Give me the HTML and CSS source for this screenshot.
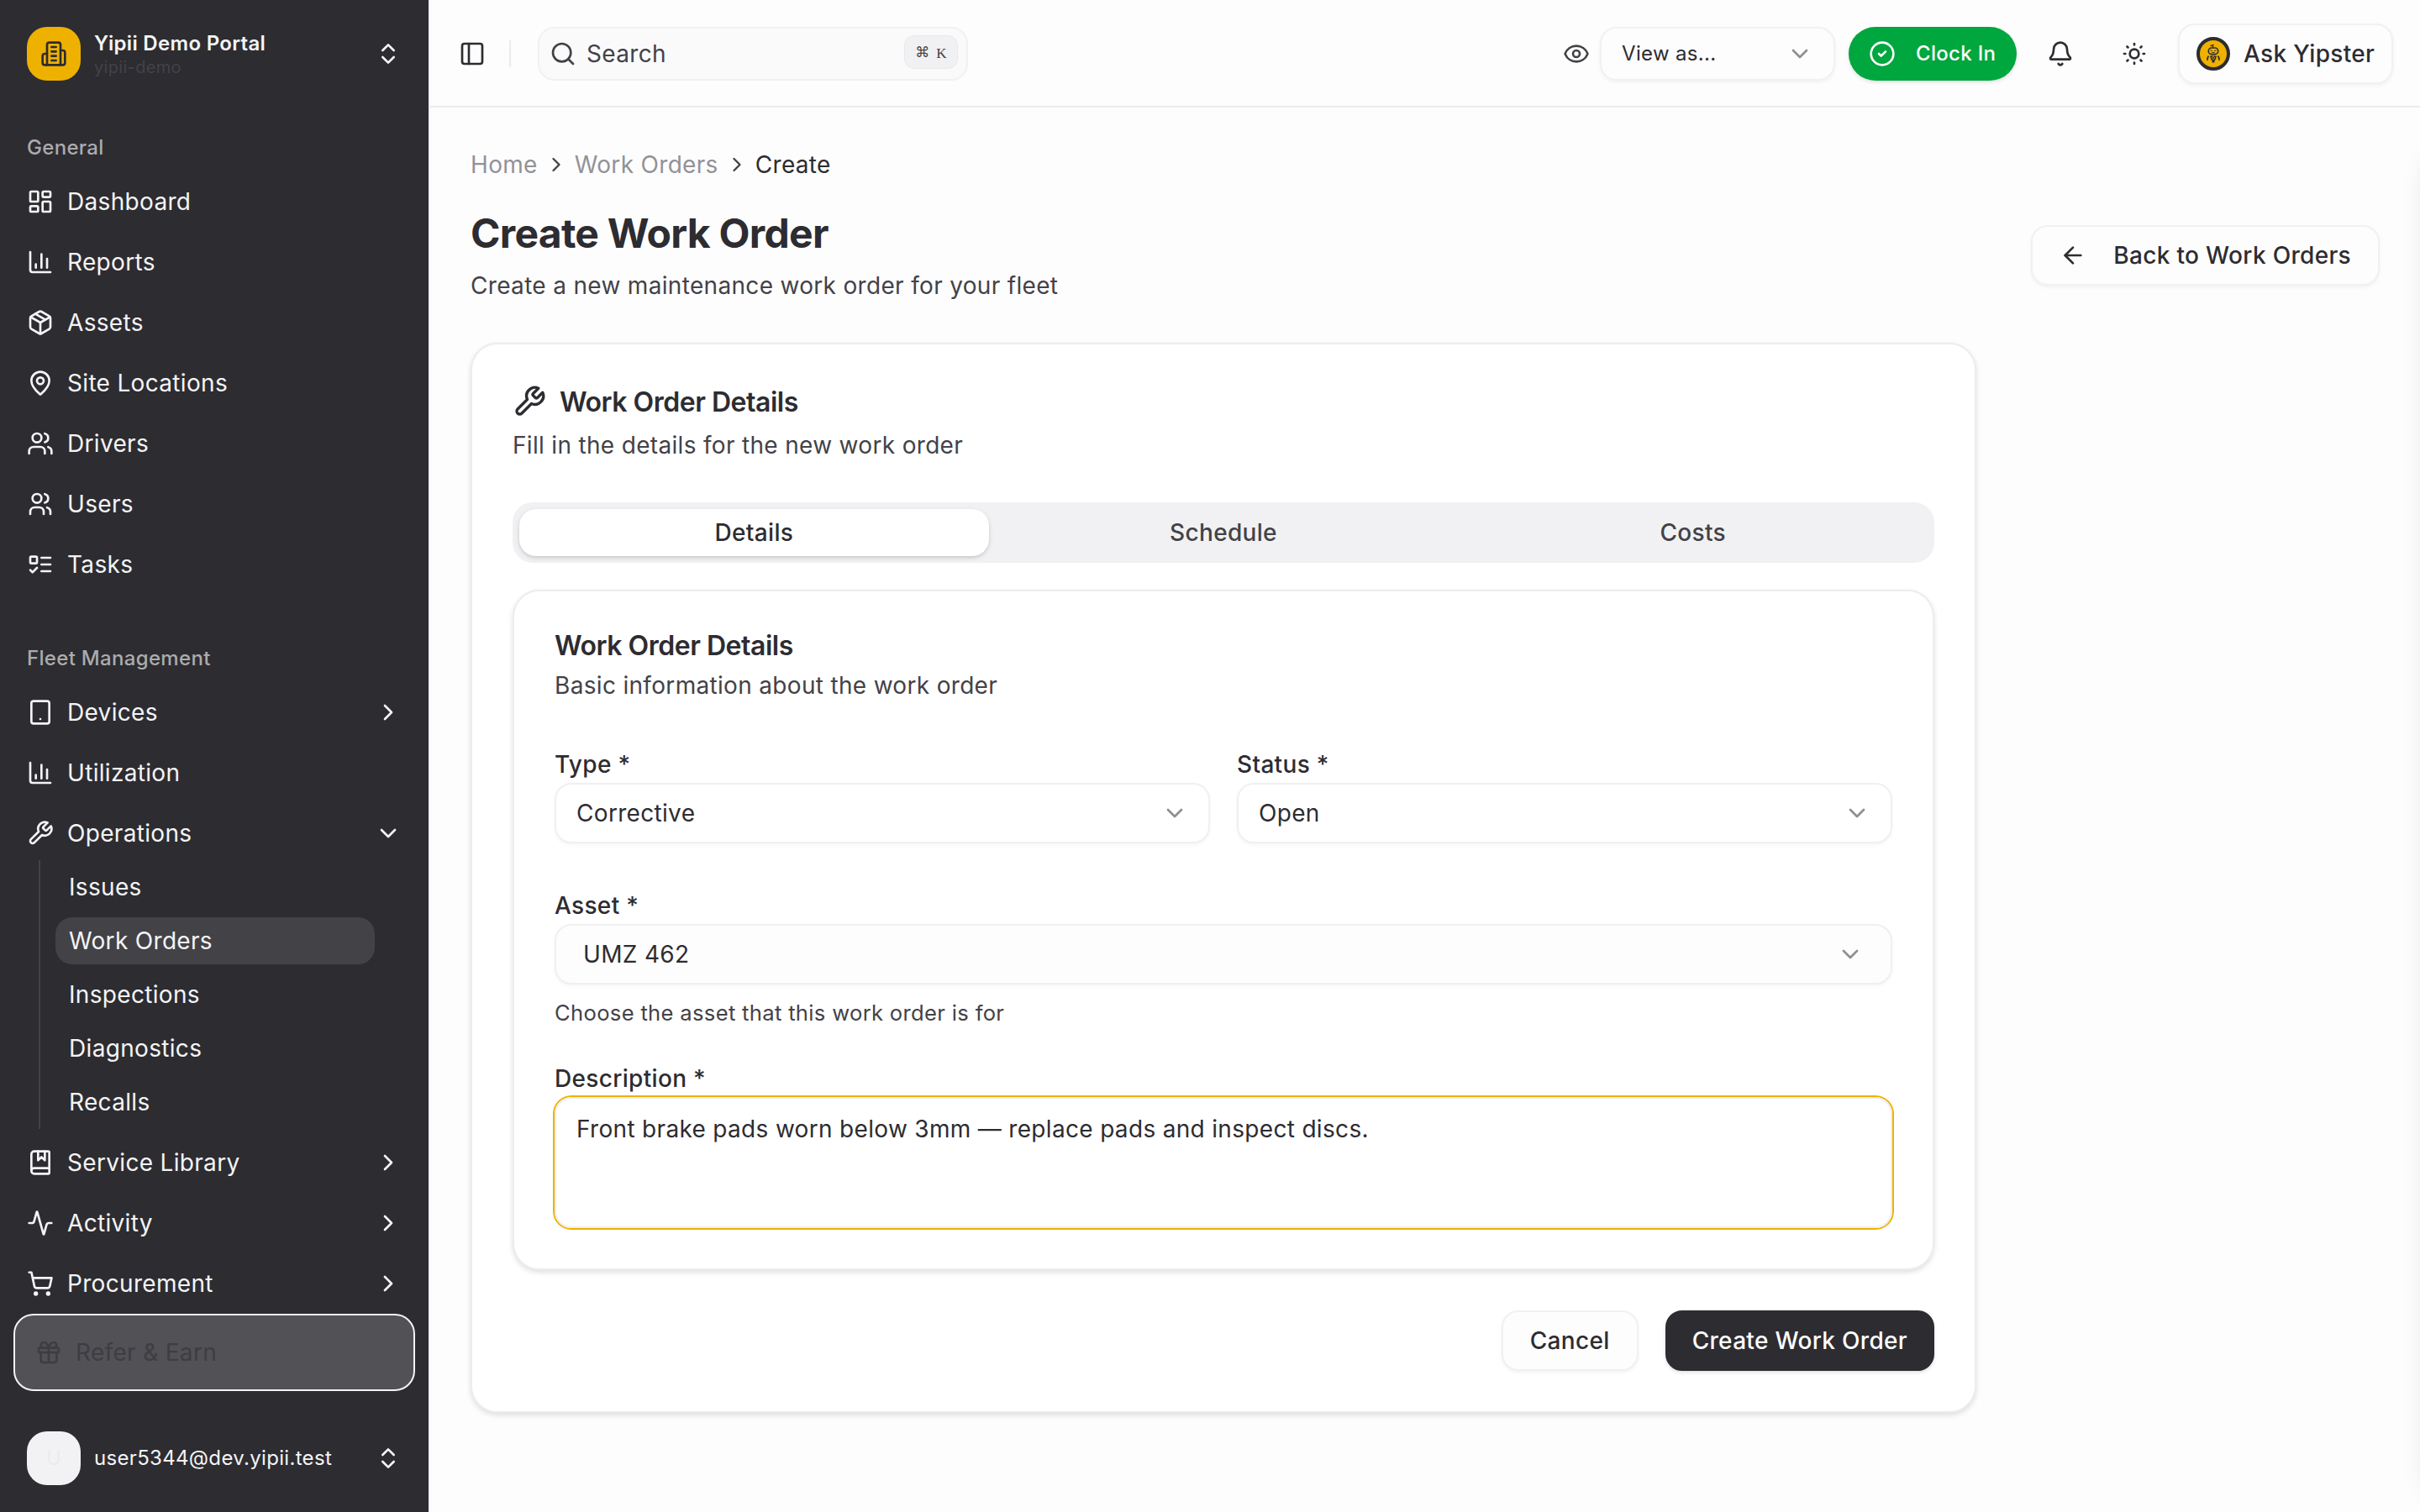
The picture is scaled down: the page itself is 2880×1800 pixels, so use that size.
FILE: index.html
```html
<!DOCTYPE html>
<html lang="en">
<head>
<meta charset="utf-8">
<title>Create Work Order</title>
<link rel="stylesheet" href="styles.css">
</head>
<body>
<svg class="sprite" xmlns="http://www.w3.org/2000/svg">
  <symbol id="i-building" viewBox="0 0 24 24"><path d="M6 22V4a2 2 0 0 1 2-2h8a2 2 0 0 1 2 2v18Z"/><path d="M6 12H4a2 2 0 0 0-2 2v6a2 2 0 0 0 2 2h2"/><path d="M18 9h2a2 2 0 0 1 2 2v9a2 2 0 0 1-2 2h-2"/><path d="M10 6h4M10 10h4M10 14h4M10 18h4"/></symbol>
  <symbol id="i-updown" viewBox="0 0 24 24"><path d="m7 15 5 5 5-5"/><path d="m7 9 5-5 5 5"/></symbol>
  <symbol id="i-right" viewBox="0 0 24 24"><path d="m9 18 6-6-6-6"/></symbol>
  <symbol id="i-down" viewBox="0 0 24 24"><path d="m6 9 6 6 6-6"/></symbol>
  <symbol id="i-dashboard" viewBox="0 0 24 24"><rect width="7" height="9" x="3" y="3" rx="1"/><rect width="7" height="5" x="14" y="3" rx="1"/><rect width="7" height="9" x="14" y="12" rx="1"/><rect width="7" height="5" x="3" y="16" rx="1"/></symbol>
  <symbol id="i-chart" viewBox="0 0 24 24"><path d="M3 3v16a2 2 0 0 0 2 2h16"/><path d="M18 17V9"/><path d="M13 17V5"/><path d="M8 17v-3"/></symbol>
  <symbol id="i-package" viewBox="0 0 24 24"><path d="M11 21.73a2 2 0 0 0 2 0l7-4A2 2 0 0 0 21 16V8a2 2 0 0 0-1-1.73l-7-4a2 2 0 0 0-2 0l-7 4A2 2 0 0 0 3 8v8a2 2 0 0 0 1 1.73z"/><path d="M12 22V12"/><path d="m3.3 7 8.7 5 8.7-5"/><path d="m7.5 4.27 9 5.15"/></symbol>
  <symbol id="i-pin" viewBox="0 0 24 24"><path d="M20 10c0 4.993-5.539 10.193-7.399 11.799a1 1 0 0 1-1.202 0C9.539 20.193 4 14.993 4 10a8 8 0 0 1 16 0"/><circle cx="12" cy="10" r="3"/></symbol>
  <symbol id="i-drivers" viewBox="0 0 24 24"><path d="M16 21v-2a4 4 0 0 0-4-4H6a4 4 0 0 0-4 4v2"/><circle cx="9" cy="7" r="4"/><path d="M22 21v-2a4 4 0 0 0-3-3.87"/><path d="M16 3.13a4 4 0 0 1 0 7.75"/></symbol>
  <symbol id="i-users" viewBox="0 0 24 24"><path d="M15 21v-2a4 4 0 0 0-4-4H7a4 4 0 0 0-4 4v2"/><circle cx="9" cy="7" r="4"/><path d="M21 21v-2a4 4 0 0 0-3-3.85"/><path d="M16 3.13a4 4 0 0 1 0 7.75"/></symbol>
  <symbol id="i-tasks" viewBox="0 0 24 24"><rect x="3" y="5" width="6" height="6" rx="1"/><path d="m3 17 2 2 4-4"/><path d="M13 6h8M13 12h8M13 18h8"/></symbol>
  <symbol id="i-device" viewBox="0 0 24 24"><rect width="16" height="20" x="4" y="2" rx="2"/><path d="M12 18h.01"/></symbol>
  <symbol id="i-wrench" viewBox="0 0 24 24"><path d="M14.7 6.3a1 1 0 0 0 0 1.4l1.6 1.6a1 1 0 0 0 1.4 0l3.77-3.77a6 6 0 0 1-7.94 7.94l-6.91 6.91a2.12 2.12 0 0 1-3-3l6.91-6.91a6 6 0 0 1 7.94-7.94l-3.76 3.76z"/></symbol>
  <symbol id="i-book" viewBox="0 0 24 24"><path d="M10 2v8l3-3 3 3V2"/><path d="M4 19.5v-15A2.5 2.5 0 0 1 6.500 2H19a1 1 0 0 1 1 1v18a1 1 0 0 1-1 1H6.500a1 1 0 0 1 0-5H20"/></symbol>
  <symbol id="i-activity" viewBox="0 0 24 24"><path d="M22 12h-2.480a2 2 0 0 0-1.930 1.460l-2.350 8.360a.25.25 0 0 1-.48 0L9.240 2.180a.25.25 0 0 0-.48 0l-2.350 8.360A2 2 0 0 1 4.490 12H2"/></symbol>
  <symbol id="i-cart" viewBox="0 0 24 24"><circle cx="8" cy="21" r="1"/><circle cx="19" cy="21" r="1"/><path d="M2.050 2.050h2l2.660 12.420a2 2 0 0 0 2 1.580h9.780a2 2 0 0 0 1.950-1.570l1.650-7.430H5.120"/></symbol>
  <symbol id="i-gift" viewBox="0 0 24 24"><rect x="3" y="8" width="18" height="4" rx="1"/><path d="M12 8v13"/><path d="M19 12v7a2 2 0 0 1-2 2H7a2 2 0 0 1-2-2v-7"/><path d="M7.500 8a2.500 2.500 0 0 1 0-5A4.800 8 0 0 1 12 8a4.800 8 0 0 1 4.500-5 2.500 2.500 0 0 1 0 5"/></symbol>
  <symbol id="i-panel" viewBox="0 0 24 24"><rect width="18" height="18" x="3" y="3" rx="2"/><path d="M9 3v18"/></symbol>
  <symbol id="i-search" viewBox="0 0 24 24"><circle cx="11" cy="11" r="8"/><path d="m21 21-4.340-4.340"/></symbol>
  <symbol id="i-eye" viewBox="0 0 24 24"><path d="M2.062 12.348a1 1 0 0 1 0-.696 10.750 10.750 0 0 1 19.876 0 1 1 0 0 1 0 .696 10.750 10.750 0 0 1-19.876 0"/><circle cx="12" cy="12" r="3"/></symbol>
  <symbol id="i-check" viewBox="0 0 24 24"><circle cx="12" cy="12" r="10"/><path d="m9 12 2 2 4-4"/></symbol>
  <symbol id="i-bell" viewBox="0 0 24 24"><path d="M10.268 21a2 2 0 0 0 3.464 0"/><path d="M3.262 15.326A1 1 0 0 0 4 17h16a1 1 0 0 0 .74-1.673C19.410 13.956 18 12.499 18 8A6 6 0 0 0 6 8c0 4.499-1.411 5.956-2.738 7.326"/></symbol>
  <symbol id="i-sun" viewBox="0 0 24 24"><circle cx="12" cy="12" r="4"/><path d="M12 3v1M12 20v1M3 12h1M20 12h1M18.364 5.636l-.707.707M6.343 17.657l-.707.707M5.636 5.636l.707.707M17.657 17.657l.707.707"/></symbol>
  <symbol id="i-back" viewBox="0 0 24 24"><path d="m12 19-7-7 7-7"/><path d="M19 12H5"/></symbol>
</svg>

<div class="app">
  <aside class="sidebar">
    <div class="sidebar-head">
      <div class="logo"><svg class="icon"><use href="#i-building"/></svg></div>
      <div class="org"><span class="org-name">Yipii Demo Portal</span><span class="org-slug">yipii-demo</span></div>
      <svg class="icon end"><use href="#i-updown"/></svg>
    </div>
    <nav class="nav">
      <section class="group">
        <h2 class="group-label">General</h2>
        <ul class="menu">
          <li class="item"><svg class="icon"><use href="#i-dashboard"/></svg>Dashboard</li>
          <li class="item"><svg class="icon"><use href="#i-chart"/></svg>Reports</li>
          <li class="item"><svg class="icon"><use href="#i-package"/></svg>Assets</li>
          <li class="item"><svg class="icon"><use href="#i-pin"/></svg>Site Locations</li>
          <li class="item"><svg class="icon"><use href="#i-drivers"/></svg>Drivers</li>
          <li class="item"><svg class="icon"><use href="#i-users"/></svg>Users</li>
          <li class="item"><svg class="icon"><use href="#i-tasks"/></svg>Tasks</li>
        </ul>
      </section>
      <section class="group">
        <h2 class="group-label">Fleet Management</h2>
        <ul class="menu">
          <li class="item"><svg class="icon"><use href="#i-device"/></svg>Devices<svg class="icon end"><use href="#i-right"/></svg></li>
          <li class="item"><svg class="icon"><use href="#i-chart"/></svg>Utilization</li>
          <li class="branch">
            <div class="item"><svg class="icon"><use href="#i-wrench"/></svg>Operations<svg class="icon end"><use href="#i-down"/></svg></div>
            <ul class="submenu">
              <li class="subitem">Issues</li>
              <li class="subitem active">Work Orders</li>
              <li class="subitem">Inspections</li>
              <li class="subitem">Diagnostics</li>
              <li class="subitem">Recalls</li>
            </ul>
          </li>
          <li class="item"><svg class="icon"><use href="#i-book"/></svg>Service Library<svg class="icon end"><use href="#i-right"/></svg></li>
          <li class="item"><svg class="icon"><use href="#i-activity"/></svg>Activity<svg class="icon end"><use href="#i-right"/></svg></li>
          <li class="item"><svg class="icon"><use href="#i-cart"/></svg>Procurement<svg class="icon end"><use href="#i-right"/></svg></li>
        </ul>
      </section>
    </nav>
    <div class="sidebar-foot">
      <div class="refer"><svg class="icon"><use href="#i-gift"/></svg>Refer &amp; Earn</div>
      <div class="account">
        <div class="avatar">U</div>
        <span class="email">user5344@dev.yipii.test</span>
        <svg class="icon end"><use href="#i-updown"/></svg>
      </div>
    </div>
  </aside>

  <div class="page">
    <header class="topbar">
      <svg class="icon"><use href="#i-panel"/></svg>
      <div class="divider"></div>
      <div class="search"><svg class="icon"><use href="#i-search"/></svg><span>Search</span><kbd class="kbd"><span class="cmd">⌘</span><span class="key">K</span></kbd></div>
      <div class="tools">
        <svg class="icon eye"><use href="#i-eye"/></svg>
        <div class="viewas"><span>View as...</span><svg class="icon muted"><use href="#i-down"/></svg></div>
        <button class="clock"><svg class="icon"><use href="#i-check"/></svg>Clock In</button>
        <span class="tool"><svg class="icon"><use href="#i-bell"/></svg></span>
        <span class="tool"><svg class="icon"><use href="#i-sun"/></svg></span>
        <button class="btn ask">
          <svg class="robot" viewBox="0 0 40 40">
            <circle cx="20" cy="20" r="18" fill="#efb100" stroke="#2d2c31" stroke-width="4"/>
            <path d="M19.500 12.500V10M16.500 10.700l4-1.400" fill="none" stroke="#2d2c31" stroke-width="1.300"/>
            <rect x="14.300" y="13" width="11.400" height="7.600" rx="3.600" fill="none" stroke="#2d2c31" stroke-width="1.600"/>
            <path d="M16.500 15.800l2.300.8M23.500 15.800l-2.300.8M18.300 18.600h3.400" fill="none" stroke="#2d2c31" stroke-width="1"/>
            <path d="M16 22.600h8l-1.200 4.400-1.300 1v2.500h-3v-2.500l-1.300-1z" fill="#2d2c31"/>
            <path d="M14.600 22.800c-1.500 1-1.700 3-1.500 5M25.400 22.800c1.500 1 1.700 3 1.500 5" fill="none" stroke="#2d2c31" stroke-width="1.700"/>
            <circle cx="20" cy="25" r="1.500" fill="none" stroke="#efb100" stroke-width=".7"/>
          </svg>Ask Yipster</button>
      </div>
    </header>

    <main class="main">
      <nav class="crumbs"><span>Home</span><svg class="icon small"><use href="#i-right"/></svg><span>Work Orders</span><svg class="icon small"><use href="#i-right"/></svg><span class="here">Create</span></nav>
      <div class="heading">
        <div>
          <h1 class="title">Create Work Order</h1>
          <p class="subtitle">Create a new maintenance work order for your fleet</p>
        </div>
        <button class="btn back"><svg class="icon"><use href="#i-back"/></svg>Back to Work Orders</button>
      </div>

      <section class="card">
        <h2 class="card-title"><svg class="icon large"><use href="#i-wrench"/></svg><span class="card-name">Work Order Details</span></h2>
        <p class="card-text">Fill in the details for the new work order</p>
        <div class="tabs">
          <div class="tab selected">Details</div>
          <div class="tab">Schedule</div>
          <div class="tab">Costs</div>
        </div>
        <section class="card inner">
          <h3 class="card-title plain">Work Order Details</h3>
          <p class="card-text">Basic information about the work order</p>
          <div class="fields">
            <div class="row">
              <div class="field"><label class="label">Type *</label><div class="select"><span>Corrective</span><svg class="icon muted"><use href="#i-down"/></svg></div></div>
              <div class="field"><label class="label">Status *</label><div class="select"><span>Open</span><svg class="icon muted"><use href="#i-down"/></svg></div></div>
            </div>
            <div class="field asset"><label class="label">Asset *</label><div class="select combo"><span>UMZ 462</span><svg class="icon muted"><use href="#i-down"/></svg></div><p class="help">Choose the asset that this work order is for</p></div>
            <div class="field"><label class="label">Description *</label><div class="textarea">Front brake pads worn below 3mm — replace pads and inspect discs.</div></div>
          </div>
        </section>
        <div class="actions">
          <button class="btn">Cancel</button>
          <button class="btn primary">Create Work Order</button>
        </div>
      </section>
    </main>
  </div>
  <div class="drawer"></div>
</div>
</body>
</html>
```
FILE: styles.css
```css
*, *::before, *::after { box-sizing: border-box; }
body {
  margin: 0;
  font-family: Inter, "Liberation Sans", sans-serif;
  font-size: 28px;
  line-height: 40px;
  letter-spacing: 0.32px;
  color: #2d2c31;
  background: #fdfdfe;
}
h1, h2, h3, p, ul { margin: 0; padding: 0; font-weight: 400; }
ul { list-style: none; }
button { font: inherit; letter-spacing: inherit; color: inherit; }

.sprite { display: none; }
.icon {
  flex: none;
  width: 32px;
  height: 32px;
  fill: none;
  stroke: currentColor;
  stroke-width: 2;
  stroke-linecap: round;
  stroke-linejoin: round;
}
.icon.end { margin-left: auto; }
.icon.small { width: 28px; height: 28px; }
.icon.large { width: 40px; height: 40px; }
.icon.muted { color: #8f8f93; margin-left: auto; }

.app { position: relative; display: flex; height: 1800px; overflow: hidden; }

/* Sidebar */
.sidebar {
  flex: none;
  display: flex;
  flex-direction: column;
  width: 512px;
  background: #2d2c31;
  border-right: 2px solid #f1f1f3;
  color: #f4f4f5;
}
.sidebar-head { display: flex; align-items: center; height: 128px; padding: 0 32px; }
.logo {
  display: grid;
  place-items: center;
  width: 64px;
  height: 64px;
  border-radius: 24px;
  background: #efb100;
  color: #2d2c31;
}
.org { display: grid; margin-left: 16px; font-size: 24px; }
.org-name { font-weight: 600; line-height: 32px; }
.org-slug { font-size: 20px; line-height: 24px; color: #434247; }
.nav { flex: 1; min-height: 0; overflow: hidden; padding: 0 16px; }
.group { padding: 16px 0; }
.group + .group { margin-top: 16px; }
.group-label {
  padding: 0 16px;
  font-size: 24px;
  font-weight: 500;
  line-height: 64px;
  color: #ababad;
}
.menu { display: grid; gap: 8px; }
.item { display: flex; align-items: center; gap: 16px; height: 64px; padding: 0 16px; }
.submenu {
  display: grid;
  gap: 8px;
  margin: 0 28px 0 30px;
  padding: 4px 20px 4px 18px;
  border-left: 2px solid #434247;
}
.subitem { height: 56px; padding: 0 16px; line-height: 56px; border-radius: 20px; }
.subitem.active { background: #434247; }
.sidebar-foot { padding: 0 16px 16px; }
.refer {
  display: flex;
  align-items: center;
  gap: 16px;
  height: 92px;
  padding: 0 24px;
  border: 2px solid #f4f4f5;
  border-radius: 24px;
  background: #525156;
  color: #3e3d42;
}
.account { display: flex; align-items: center; height: 96px; margin-top: 32px; padding: 0 16px; }
.avatar {
  width: 64px;
  height: 64px;
  border-radius: 24px;
  background: #f2f2f4;
  color: #ebebee;
  font-size: 24px;
  line-height: 64px;
  text-align: center;
}
.email { margin-left: 16px; font-size: 24px; }

/* Top bar */
.page { flex: 1; min-width: 0; }
.topbar {
  display: flex;
  align-items: center;
  height: 128px;
  padding: 2px 32px 0 34px;
  border-bottom: 2px solid #ebebed;
}
.divider { width: 2px; height: 32px; margin: 0 32px 0 28px; background: #ebebed; }
.search {
  display: flex;
  align-items: center;
  gap: 12px;
  width: 512px;
  height: 64px;
  padding: 0 10px 0 12px;
  border: 2px solid #f1f1f3;
  border-radius: 20px;
  background: #fafafb;
  color: #434247;
}
.kbd {
  display: flex;
  align-items: center;
  justify-content: center;
  gap: 8px;
  width: 64px;
  height: 40px;
  margin: 0 0 4px auto;
  border: 1px solid #e9e9eb;
  border-radius: 12px;
  background: #f1f1f3;
  font-family: "Liberation Serif", serif;
  font-size: 17px;
  line-height: 24px;
  letter-spacing: 0;
}
.cmd { font-family: "DejaVu Sans", sans-serif; font-size: 17px; }
.key { padding-top: 4px; }
.tools { display: flex; align-items: center; margin-left: auto; }
.eye { color: #434247; margin-right: 12px; }
.viewas {
  display: flex;
  align-items: center;
  width: 280px;
  height: 64px;
  margin-right: 16px;
  padding: 0 24px;
  border: 2px solid #f1f1f3;
  border-radius: 20px;
  box-shadow: 0 2px 4px rgba(0, 0, 0, 0.05);
  font-size: 24px;
}
.clock {
  display: flex;
  align-items: center;
  gap: 24px;
  width: 200px;
  height: 64px;
  margin-right: 16px;
  padding: 0 24px;
  border: 0;
  border-radius: 32px;
  background: #00a63e;
  box-shadow: 0 2px 4px rgba(0, 0, 0, 0.12);
  color: #fff;
  font-size: 24px;
  font-weight: 500;
  white-space: nowrap;
}
.tool { display: grid; place-items: center; width: 72px; height: 72px; margin-right: 16px; }
.btn {
  display: flex;
  align-items: center;
  height: 72px;
  padding: 0 32px;
  border: 2px solid #f1f1f3;
  border-radius: 20px;
  background: #fdfdfe;
  box-shadow: 0 2px 4px rgba(0, 0, 0, 0.05);
  font-weight: 500;
  white-space: nowrap;
}
.btn.ask { gap: 16px; width: 256px; padding: 0 20px; }
.robot { width: 40px; height: 40px; flex: none; }

/* Content */
.main { padding: 48px; }
.crumbs { display: flex; align-items: center; gap: 8px; height: 40px; color: #929296; }
.crumbs .icon { color: #434247; }
.crumbs .here { color: #2d2c31; }
.heading { display: flex; align-items: center; justify-content: space-between; margin-top: 32px; }
.title { font-size: 48px; font-weight: 700; line-height: 60px; letter-spacing: -0.72px; }
.subtitle { margin-top: 12px; color: #434247; }
.btn.back { gap: 32px; }
.card {
  width: 1792px;
  margin-top: 48px;
  padding: 48px;
  border: 2px solid #ededef;
  border-radius: 32px;
  background: #fff;
  box-shadow: 0 2px 6px rgba(0, 0, 0, 0.08), 0 4px 8px -2px rgba(0, 0, 0, 0.08);
}
.card-title {
  display: flex;
  align-items: center;
  gap: 16px;
  font-size: 32px;
  font-weight: 600;
  line-height: 38px;
  letter-spacing: -0.48px;
}
.card-name { padding-top: 2px; }
.card-title.plain { padding-top: 2px; line-height: 30px; }
.card-text { margin-top: 12px; color: #434247; }
.tabs {
  display: grid;
  grid-template-columns: repeat(3, 1fr);
  height: 72px;
  margin-top: 48px;
  padding: 8px;
  border-radius: 24px;
  background: #f1f1f3;
  color: #434247;
  font-weight: 500;
  text-align: center;
  line-height: 56px;
}
.tab.selected {
  border-radius: 20px;
  background: #fff;
  box-shadow: 0 2px 6px rgba(0, 0, 0, 0.1), 0 2px 4px -1px rgba(0, 0, 0, 0.12);
  color: #2d2c31;
}
.card.inner { width: auto; margin-top: 32px; }
.fields { display: grid; gap: 60px; margin-top: 60px; }
.row { display: grid; grid-template-columns: 1fr 1fr; gap: 32px; }
.field { display: grid; gap: 8px; }
.label { font-weight: 500; line-height: 28px; }
.select {
  display: flex;
  align-items: center;
  height: 72px;
  padding: 0 24px;
  border: 2px solid #f0f0f3;
  border-radius: 20px;
  background: #fff;
  box-shadow: 0 2px 4px rgba(0, 0, 0, 0.04);
}
.select.combo { padding: 0 32px; background: #fdfdfe; }
.help { margin-top: 8px; font-size: 25.6px; line-height: 36px; color: #434247; }
.asset { margin-bottom: -14px; }
.textarea {
  height: 156px;
  padding: 16px 24px;
  border: 2px solid #eeeef1;
  border-radius: 20px;
  box-shadow: 0 0 0 2px #efb100;
}
.actions { display: flex; justify-content: flex-end; gap: 32px; margin-top: 48px; }
.btn.primary { border-color: #2d2c31; background: #2d2c31; color: #fdfdfe; padding: 0 30px; box-shadow: 0 2px 4px rgba(0, 0, 0, 0.12); }

/* Closed drawer parked past the right edge; only its shadow shows */
.drawer {
  position: absolute;
  top: 160px;
  bottom: 32px;
  left: 2880px;
  width: 400px;
  border-radius: 36px;
  box-shadow: 0 20px 30px -6px rgba(0, 0, 0, 0.1);
}
```
